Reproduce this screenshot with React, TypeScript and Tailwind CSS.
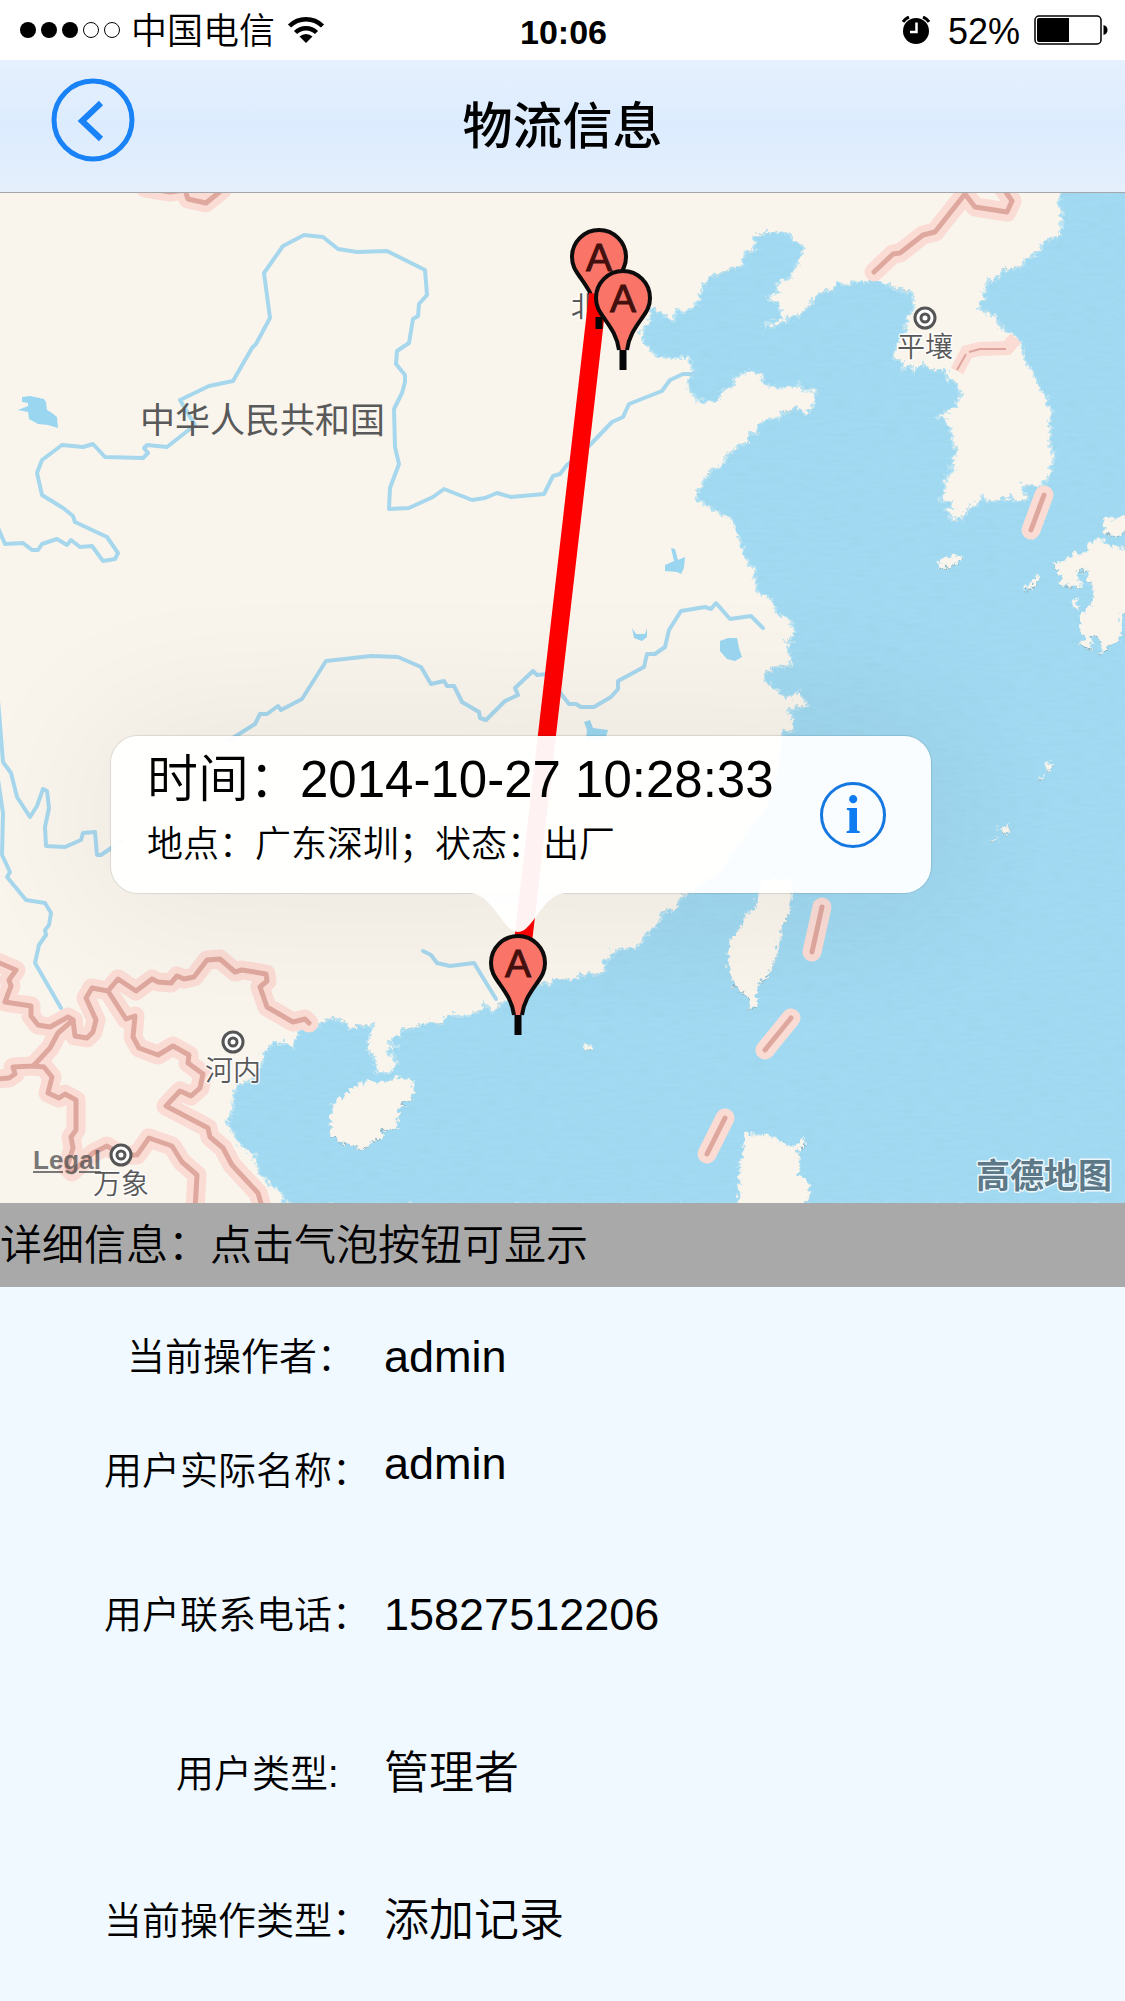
import React from "react";

const LATIN_CJK = "font-['Liberation_Sans','Noto_Sans_CJK_SC',sans-serif]";

const SEA =
  "M1061 190 1058 203 1063 212 1061 235 1043 242 1038 253 1023 260 1023 265 1002 272 1000 277 985 283 984 299 979 303 979 309 995 316 1001 328 1015 335 1021 343 1023 358 1033 373 1040 389 1046 393 1048 403 1052 412 1048 425 1052 428 1049 438 1051 448 1054 453 1052 463 1050 475 1038 487 1023 485 1023 490 1027 498 1017 501 1010 497 1007 500 998 499 988 503 983 497 980 502 970 507 967 511 960 520 950 521 950 513 943 510 952 508 951 502 941 500 944 490 947 473 954 468 949 466 953 463 952 456 958 450 952 445 951 430 945 418 937 418 943 413 955 408 957 397 962 395 957 390 958 383 947 380 947 368 935 372 922 364 913 373 910 366 901 370 902 362 892 357 897 342 907 330 904 327 910 313 913 305 912 293 900 290 890 286 885 284 882 281 854 281 850 284 836 284 833 290 818 293 815 298 797 317 790 317 780 324 774 325 765 328 763 322 775 322 782 316 778 302 770 302 768 295 778 292 776 283 790 277 793 267 798 262 803 250 801 245 794 243 788 232 768 232 757 237 755 240 755 250 745 253 742 265 723 272 710 277 702 285 699 302 691 311 675 311 673 323 668 317 654 309 650 313 649 323 642 327 642 340 656 356 690 358 692 370 687 382 690 392 702 402 715 403 722 390 733 385 733 377 750 371 762 375 763 382 775 388 797 386 798 383 800 389 817 390 812 408 805 415 797 408 783 412 780 418 768 418 757 425 757 433 748 433 748 442 738 446 727 455 720 467 713 467 705 478 702 488 696 492 697 502 708 505 717 513 728 517 734 523 740 543 747 558 748 565 755 568 756 592 774 600 775 613 789 618 793 628 793 640 784 641 790 644 788 654 793 665 779 667 764 673 763 680 775 688 785 698 799 692 802 698 808 705 795 708 788 712 793 715 793 730 782 732 783 736 770 800 720 870 690 893 677 900 677 910 662 912 658 923 635 948 620 948 613 953 604 963 604 972 582 976 571 981 553 978 548 987 543 983 520 992 500 1005 491 1011 483 1003 483 1011 472 1012 470 1015 447 1015 442 1023 425 1024 403 1030 398 1037 387 1043 398 1046 387 1050 391 1053 397 1063 390 1072 377 1072 372 1055 368 1053 368 1037 373 1027 365 1025 348 1030 347 1023 328 1018 320 1025 297 1033 293 1047 283 1043 273 1043 267 1048 262 1058 255 1078 237 1085 233 1093 232 1110 227 1120 232 1133 243 1148 255 1155 257 1168 272 1186 278 1188 282 1197 290 1206 1140 1206 1140 190Z";

const ISLANDS = [
  "M353 1087 370 1081 382 1083 392 1078 405 1078 413 1082 414 1095 408 1102 400 1105 397 1128 383 1130 382 1138 370 1140 368 1148 358 1148 342 1143 337 1137 332 1136 330 1123 332 1104 343 1097Z",
  "M762 880 792 880 791 893 788 913 782 925 778 947 773 963 768 975 758 983 756 1005 749 1008 748 997 733 983 728 965 729 940 738 930 748 912 755 907Z",
  "M745 1135 765 1133 777 1140 792 1146 803 1138 805 1143 798 1150 799 1173 809 1182 810 1192 805 1206 737 1206 739 1193 739 1160 743 1158Z",
  "M938 562 957 554 963 558 950 567 940 567Z",
  "M1103 517 1112 519 1130 514 1130 532 1115 535 1105 532Z",
  "M1130 550 1107 545 1098 538 1088 545 1087 552 1077 553 1067 559 1052 563 1060 573 1062 585 1078 587 1083 590 1077 579 1077 570 1087 570 1087 578 1093 588 1092 602 1083 612 1080 627 1085 638 1078 643 1093 649 1090 635 1098 637 1103 647 1098 655 1107 648 1120 638 1122 612 1130 612Z",
  "M1073 598 1078 597 1076 603 1079 611 1073 609Z",
  "M1038 575 1038 582 1031 588 1022 591 1028 585Z",
  "M1048 763 1054 764 1049 771 1045 768Z",
  "M1043 773 1045 776 1040 778Z",
  "M1000 828 1012 824 1006 834 1001 834Z",
  "M997 836 996 841 991 841Z",
  "M583 1044H591V1049H583Z",
];

const LAKES = [
  "M22 397 30 396 44 399 46 402 47 410 52 413 57 417 58 428 48 425 38 424 29 419 28 412 18 410 28 406 28 403 22 402Z",
  "M671 548 675 549 678 560 685 557 684 568 681 574 677 572 665 571 665 565 674 561Z",
  "M632 628 636 634 645 634 647 628 647 637 642 641 634 638Z",
  "M720 641 728 638 737 638 739 648 742 657 735 661 727 659 720 651Z",
  "M584 722 590 720 593 728 608 730 605 740 586 740 587 730Z",
];

const RIVERS = [
  "M-2 528 5 544 23 543 32 550 38 550 42 544 57 539 67 545 71 540 80 547 92 546 103 561 115 559 118 553 107 537 75 522 73 516 63 508 42 495 37 473 42 460 62 445 83 447 93 444 105 457 143 458 148 453 144 448 147 445 167 447 195 425 180 400 209 386 233 381 252 348 256 344 270 318 264 273 283 246 304 235 323 237 338 249 357 252 387 251 425 270 427 295 419 304 418 316 413 319 409 343 397 351 396 364 405 375 405 382 402 393 394 409 395 447 399 464 390 488 389 509 409 508 433 497 444 489 472 500 485 498 497 493 511 497 544 494 553 476 560 474 567 465 590 445 612 422 623 417 629 404 662 391 670 380 683 374 695 374",
  "M228 741 255 724 260 714 267 714 278 706 281 710 302 699 326 661 371 656 398 657 421 667 431 684 444 681 447 686 454 686 462 702 479 712 480 718 486 720 505 701 518 695 515 688 533 671 537 675 548 674 562 695 569 704 576 704 581 707 594 707 611 697 618 689 618 681 644 667 647 654 655 654 665 647 669 630 681 611 705 607 711 609 716 603 730 619 751 616 763 628",
  "M-2 700 3 762 11 773 17 797 30 817 37 806 43 789 47 791 49 808 45 827 46 846 65 847 81 840 83 833 95 832 97 855 101 855 123 840",
  "M-2 780 3 813 2 855 10 872 7 877 26 900 45 903 51 913 49 925 45 930 46 935 39 945 35 963 61 1008",
  "M423 951 431 955 437 963 450 966 474 963 496 999",
];

const BORDERS = [
  "M-5 961 16 970 9 980 11 986 5 1002 31 1006 31 1016 38 1025 50 1027 68 1017 73 1020 75 1036 87 1038 93 1032 96 1020 86 998 92 988 108 991 118 979 136 991 152 979 158 982 171 983 177 976 184 979 194 977 207 960 220 959 235 972 242 970 266 974 267 981 260 987 267 1007 293 1022 305 1019 309 1023",
  "M108 991 126 1019 135 1016 133 1037 139 1048 158 1055 173 1046 189 1055 188 1063 203 1074 200 1088 191 1096 180 1091 166 1106 208 1128 210 1137 223 1148 232 1165 258 1193 263 1210",
  "M73 1020 58 1033 50 1048 37 1062 33 1066 13 1067 15 1074 9 1078 -5 1079",
  "M33 1066 44 1067 52 1077 48 1093 59 1098 65 1094 76 1100 76 1130 71 1137 73 1148 67 1167 72 1172 93 1153 107 1146 121 1155 137 1155 149 1138 172 1146 182 1162 197 1175 195 1210",
  "M145 188 170 192 185 190 188 199 206 203 222 190",
  "M874 272 893 254 900 253 923 235 935 232 965 194 975 207 1007 212 1012 201 1003 188",
  "M1044 495 1031 530",
  "M822 907 812 952",
  "M791 1018 765 1050",
  "M725 1118 707 1154",
];

const CITIES = [
  { name: "平壤", x: 925, y: 318 },
  { name: "河内", x: 233, y: 1042 },
  { name: "万象", x: 121, y: 1155 },
];

function Pin({ x, y }: { x: number; y: number }) {
  return (
    <g transform={`translate(${x} ${y})`}>
      <path
        d="M-4 52C-6 38-12 30-19 20-24 13-27 8-27 0A27 27 0 0 1 27 0C27 8 24 13 19 20 12 30 6 38 4 52Z"
        fill="#fb7468"
      />
      <path
        d="M-4 52C-6 38-12 30-19 20-24 13-27 8-27 0A27 27 0 0 1 27 0C27 8 24 13 19 20 12 30 6 38 4 52"
        fill="none"
        stroke="#0c0c0c"
        strokeWidth="4"
      />
      <path d="M0 52V72" stroke="#050505" strokeWidth="7" />
      <text
        y="14"
        textAnchor="middle"
        fontSize="39"
        fill="#43100d"
        stroke="#43100d"
        className="font-['Liberation_Sans',sans-serif]"
      >
        A
      </text>
    </g>
  );
}

function MapCanvas() {
  return (
    <svg
      viewBox="0 193 1125 1010"
      preserveAspectRatio="xMinYMin slice"
      className="block h-[1010px] w-full bg-[#f9f5ed]"
      role="img"
      aria-label="物流路线地图"
    >
      <defs>
        <filter id="ripple" x="0" y="0" width="100%" height="100%">
          <feTurbulence type="fractalNoise" baseFrequency="0.06 0.3" numOctaves="2" seed="4" />
          <feColorMatrix values="0 0 0 0 0.3  0 0 0 0 0.6  0 0 0 0 0.75  0.5 0 0 0 -0.19" />
          <feComposite in2="SourceGraphic" operator="in" />
        </filter>
        <filter id="jagged" filterUnits="userSpaceOnUse" x="-20" y="170" width="1180" height="1060">
          <feTurbulence type="turbulence" baseFrequency="0.14" numOctaves="2" seed="9" result="noise" />
          <feDisplacementMap in="SourceGraphic" in2="noise" scale="9" xChannelSelector="R" yChannelSelector="G" />
        </filter>
      </defs>
      <g filter="url(#jagged)">
        <path d={SEA} fill="#7d9aa3" transform="translate(-2 -3)" />
        <path d={SEA} fill="#a1daf2" stroke="#bfe4f2" strokeWidth="2" transform="translate(-2 -2)" />
      </g>
      <path d={SEA} fill="#a1daf2" filter="url(#ripple)" />
      <g filter="url(#jagged)">
        <g fill="#7d9aa3" transform="translate(-2 -1)">
          {ISLANDS.map((d) => (
            <path key={d} d={d} />
          ))}
        </g>
        <g fill="#f9f5ed" stroke="#d3e9ef" strokeWidth="1" transform="translate(-2 -2)">
          {ISLANDS.map((d) => (
            <path key={d} d={d} />
          ))}
        </g>
      </g>
      <g fill="#9bd6f0">
        {LAKES.map((d) => (
          <path key={d} d={d} />
        ))}
      </g>
      <g fill="none" stroke="#a7d7ed" strokeWidth="4" strokeLinejoin="round" strokeLinecap="round">
        {RIVERS.map((d) => (
          <path key={d} d={d} />
        ))}
      </g>
      <g fill="none" stroke="#fadcd5" strokeWidth="19" strokeLinejoin="round" strokeLinecap="round">
        {BORDERS.map((d) => (
          <path key={d} d={d} />
        ))}
      </g>
      <path d="M957 371 967 352 980 349 1007 348 1016 338" fill="none" stroke="#fadcd5" strokeWidth="14" />
      <path d="M957 370 966 354M969 352 980 349H1006" fill="none" stroke="#dfa49b" strokeWidth="2" />
      <g fill="none" stroke="#dfa89f" strokeWidth="5" strokeLinejoin="round" strokeLinecap="round">
        {BORDERS.map((d) => (
          <path key={d} d={d} />
        ))}
      </g>

      <g
        fill="#595959"
        stroke="#ffffff"
        strokeWidth="3"
        strokeOpacity="0.8"
        paintOrder="stroke"
        strokeLinejoin="round"
        fontSize="28"
        className="font-['Noto_Sans_CJK_SC',sans-serif]"
      >
        <text x="140" y="433" fontSize="35" strokeOpacity="0">
          中华人民共和国
        </text>
        <text x="571" y="317">
          北
        </text>
        {CITIES.map((c) => (
          <text key={c.name} x={c.x} y={c.y + 39} textAnchor="middle" fontWeight="350">
            {c.name}
          </text>
        ))}
        <text x="976" y="1188" fontSize="34" fontWeight="700" fill="#5d7887">
          高德地图
        </text>
      </g>
      {CITIES.map((c) => (
        <g key={c.name} fill="#ffffff" stroke="#555555" strokeWidth="3">
          <circle cx={c.x} cy={c.y} r="10" />
          <circle cx={c.x} cy={c.y} r="4" />
        </g>
      ))}

      <Pin x={599} y={257} />
      <path d="M598 294 520 968" stroke="#ff0000" strokeWidth="18" />
      <path d="M599 317V329" stroke="#050505" strokeWidth="7" />
      <Pin x={623} y={298} />
    </svg>
  );
}

function StatusBar() {
  return (
    <div className="flex h-[60px] items-center justify-between bg-white pl-[19px] pr-[17px] text-[36px] leading-none text-black">
      <div className="flex flex-1 items-center">
        <svg width="104" height="18" viewBox="0 0 104 18" aria-label="信号">
          {[9, 30, 51].map((x) => (
            <circle key={x} cx={x} cy="9" r="8" />
          ))}
          {[72, 93].map((x) => (
            <circle key={x} cx={x} cy="9" r="7.5" fill="none" stroke="#000" />
          ))}
        </svg>
        <span className="ml-2 pt-1 font-[350]">中国电信</span>
        <svg className="ml-3 mb-0.5" width="38" height="28" viewBox="0 0 38 28" aria-label="Wi-Fi">
          <g fill="none" stroke="#000" strokeWidth="4.5">
            <path d="M2.500 11A23.500 23.500 0 0 1 35.500 11" />
            <path d="M8.500 17.500A15 15 0 0 1 29.500 17.500" />
          </g>
          <path d="M19 28 12.500 21.500A9.500 9.500 0 0 1 25.500 21.500Z" />
        </svg>
      </div>
      <span className="pt-1 text-[34px] font-bold">10:06</span>
      <div className="flex flex-1 items-center justify-end">
        <svg width="28" height="28" viewBox="0 0 28 28" aria-label="闹钟">
          <circle cx="14" cy="15" r="13" />
          <path d="M1 6A13 13 0 0 1 7 1M27 6A13 13 0 0 0 21 1" fill="none" stroke="#000" strokeWidth="3" />
          <path d="M14.500 6.500V16H8" fill="none" stroke="#fff" strokeWidth="2.500" />
        </svg>
        <span className="ml-[18px] pt-1">52%</span>
        <svg className="ml-[14px]" width="74" height="30" viewBox="0 0 74 30" aria-label="电池">
          <rect x="1" y="1" width="66" height="28" rx="4" fill="none" stroke="#000" strokeWidth="1.500" />
          <path d="M5 3H35V27H5Q3 27 3 25V5Q3 3 5 3Z" />
          <path d="M69.500 10Q73.500 11 73.500 15T69.500 20Z" />
        </svg>
      </div>
    </div>
  );
}

function Callout() {
  return (
    <div className="absolute left-[111px] top-[543px] w-[820px]">
      <div className="flex items-center rounded-[27px] bg-white/95 pb-[13px] pl-9 pr-[45px] pt-[14px] shadow-[0_0_1px_1px_rgba(0,0,0,0.1),0_0_160px_10px_rgba(0,0,0,0.07)]">
        <div className="flex-1 whitespace-nowrap text-black">
          <p className="text-[51px] font-[350] leading-[60px]">时间：2014-10-27 10:28:33</p>
          <p className="text-[36px] font-[350] leading-[70px]">地点：广东深圳；状态：出厂</p>
        </div>
        <button
          type="button"
          aria-label="详细信息"
          className="flex size-[66px] items-center justify-center rounded-full border-[3px] border-[#1478e0] font-['Liberation_Serif',serif] text-[54px] font-bold leading-none text-[#0f7bf0]"
        >
          i
        </button>
      </div>
      <svg className="absolute left-[360px] top-full" width="94" height="40" viewBox="0 0 94 40" aria-hidden="true">
        <path d="M0 0C23 3 32 39 47 39S70 3 94 0Z" fill="#fff" fillOpacity="0.95" />
      </svg>
    </div>
  );
}

type Field = { label: string; value: string; row: string; indent: string; align: string };

const FIELDS: Field[] = [
  { label: "当前操作者：", value: "admin", row: "mt-[40px]", indent: "pl-[127px]", align: "self-center" },
  { label: "用户实际名称：", value: "admin", row: "mt-[54px]", indent: "pl-[104px]", align: "self-start" },
  { label: "用户联系电话：", value: "15827512206", row: "mt-[84px]", indent: "pl-[104px]", align: "self-center" },
  { label: "用户类型:", value: "管理者", row: "mt-[99px]", indent: "pl-[176px]", align: "self-center" },
  { label: "当前操作类型：", value: "添加记录", row: "mt-[87px]", indent: "pl-[104px]", align: "self-center" },
];

export default function App() {
  return (
    <div className={`flex min-h-screen flex-col bg-[#f0f9ff] text-black ${LATIN_CJK}`}>
      <StatusBar />
      <header className="grid h-[133px] grid-cols-[1fr_auto_1fr] items-center border-b border-[#a5a7ab] bg-linear-to-b from-[#e6f0fe] via-[#dcecfe] to-[#e5effc] px-[51px]">
        <button type="button" aria-label="返回" className="mt-[18px] size-[84px] self-start">
          <svg viewBox="0 0 84 84" fill="none" stroke="#1a82f7" strokeWidth="5">
            <circle cx="42" cy="42" r="39" />
            <path d="M50 25 31 43 50 61" strokeWidth="6" />
          </svg>
        </button>
        <h1 className="pt-0.5 text-[50px] font-medium leading-none">物流信息</h1>
      </header>

      <main>
        <section className="relative overflow-hidden">
          <MapCanvas />
          <Callout />
          <svg
            className="absolute left-[488px] top-[739px]"
            width="60"
            height="105"
            viewBox="-30 -31 60 105"
            aria-hidden="true"
          >
            <Pin x={0} y={0} />
          </svg>
          <a
            href="#legal"
            className="absolute left-[33px] top-[952px] text-[26px] font-bold leading-[30px] text-[#4d4d4d]/75 underline decoration-2 underline-offset-2"
          >
            Legal
          </a>
        </section>

        <h2 className="bg-[#a9a9a9] pt-0.5 text-[42px] font-[350] leading-[82px]">详细信息：点击气泡按钮可显示</h2>

        <dl>
          {FIELDS.map((f) => (
            <div key={f.label} className={`grid grid-cols-[384px_1fr] ${f.row}`}>
              <dt className={`whitespace-nowrap text-[38px] font-[350] leading-[60px] ${f.indent}`}>{f.label}</dt>
              <dd className={`text-[45px] font-[350] leading-[46px] ${f.align}`}>{f.value}</dd>
            </div>
          ))}
        </dl>
      </main>
    </div>
  );
}
